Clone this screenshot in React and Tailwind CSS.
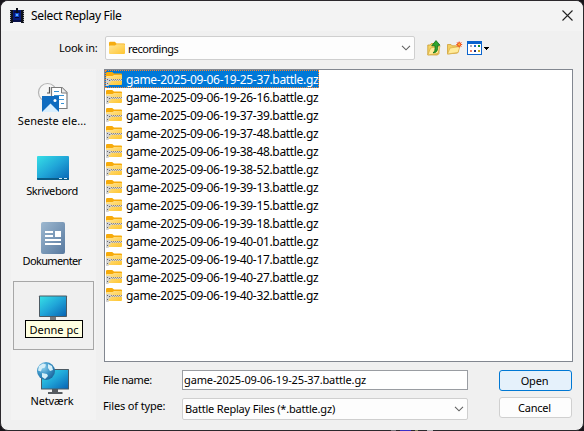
import React from 'react';

const FILES = [
  '19-25-37', '19-26-16', '19-37-39', '19-37-48', '19-38-48', '19-38-52', '19-39-13',
  '19-39-15', '19-39-18', '19-40-01', '19-40-17', '19-40-27', '19-40-32',
].map((t) => `game-2025-09-06-${t}.battle.gz`);

function Defs() {
  return (
    <svg width="0" height="0" className="absolute">
      <defs>
        <linearGradient id="screen" x1="0" y1="0" x2="1" y2="1">
          <stop offset="0" stopColor="#36dfe6" />
          <stop offset="0.5" stopColor="#20a5d8" />
          <stop offset="1" stopColor="#0864b4" />
        </linearGradient>
        <linearGradient id="folder" x1="0" y1="0" x2="1" y2="1">
          <stop offset="0" stopColor="#ffe69a" />
          <stop offset="1" stopColor="#ffc52f" />
        </linearGradient>
        <linearGradient id="doc" x1="0" y1="0" x2="1" y2="1">
          <stop offset="0" stopColor="#9db8d0" />
          <stop offset="1" stopColor="#57799f" />
        </linearGradient>
        <radialGradient id="globe" cx="0.35" cy="0.3" r="0.8">
          <stop offset="0" stopColor="#8fd0ee" />
          <stop offset="0.5" stopColor="#3a93c6" />
          <stop offset="1" stopColor="#185d94" />
        </radialGradient>
      </defs>
    </svg>
  );
}

function AppIcon() {
  return (
    <svg width="16" height="16" viewBox="0 0 16 16" shapeRendering="crispEdges">
      <path d="M1 2h3v13H1zM12 2h3v13h-3z" fill="#10131c" />
      <path d="M1 3h1v1H1zM1 5h1v1H1zM1 7h1v1H1zM1 9h1v1H1zM1 11h1v1H1zM1 13h1v1H1zM14 3h1v1h-1zM14 5h1v1h-1zM14 7h1v1h-1zM14 9h1v1h-1zM14 11h1v1h-1zM14 13h1v1h-1z" fill="#a0a0a0" />
      <path d="M4 2h8v12H4z" fill="#081b78" />
      <path d="M5 3h6v2H5zM4 12h8v2H4z" fill="#07104a" />
      <path d="M6 5h4v5H6z" fill="#1647d0" />
      <path d="M7 0h2v5H7z" fill="#0a0d18" />
      <path d="M7 6h2v2H7z" fill="#58b5ff" />
      <path d="M6 9h4v1H6z" fill="#02082c" />
    </svg>
  );
}

function Folder() {
  return (
    <svg width="16" height="14" viewBox="0 0 16 14" className="shrink-0">
      <path d="M0 2a1.2 1.2 0 0 1 1.2-1.2h4.6L7.5 2.5H15a1 1 0 0 1 1 1V7H0z" fill="#f5ac12" />
      <path d="M0 5.5a1 1 0 0 1 1-1h5L7.600 3.200H15a1 1 0 0 1 1 1V12a1 1 0 0 1-1 1H1a1 1 0 0 1-1-1z" fill="url(#folder)" />
    </svg>
  );
}

function ZipFolder() {
  return (
    <svg width="16" height="16" viewBox="0 1 16 16" className="shrink-0">
      <path d="M0 2.200A1.200 1.200 0 0 1 1.200 1h5L8 2.500h7a1 1 0 0 1 1 1V8H0z" fill="#f7ab0b" />
      <path d="M0 6a1 1 0 0 1 1-1h5.500L8 4h7a1 1 0 0 1 1 1v8a1 1 0 0 1-1 1H1a1 1 0 0 1-1-1z" fill="url(#folder)" />
      <path d="M4 8h12v2H4z" fill="#e3d6b8" />
      <path d="M5 8.500h11" stroke="#85858a" strokeDasharray="1 1" />
      <path d="M4 9.500h12" stroke="#aaa497" strokeDasharray="1 1" />
      <path d="M0 7h4.500v4.500H2.700V15H0z" fill="#d3d3d3" />
      <path d="M1 8h1v1H1zM3 9h1v1H3zM1 12h1v1H1z" fill="#66686c" />
    </svg>
  );
}

function Chevron() {
  return (
    <svg width="10" height="6" viewBox="0 0 10 6" fill="none" stroke="#606060" strokeWidth="1.100">
      <path d="M1 0.800l4 4 4-4" />
    </svg>
  );
}

function UpFolderIcon() {
  return (
    <svg width="16" height="16" viewBox="0 0 16 16">
      <path d="M.8 14.800V5h2.500l1-1.500H9v3h3v7l-1.500 1.500z" fill="#f5d566" stroke="#c99a2c" strokeWidth=".8" />
      <path d="M.8 15L3.500 8l9.500-2-2 7.500z" fill="#ffeb98" stroke="#d4a63a" strokeWidth=".7" />
      <path d="M6 12.800c2-1 2.200-3 2-7H4.700L9 .6l4 4.600-2.300.2c.2 5-1 7.500-4.700 7.400z" fill="#2fa52e" stroke="#126c16" strokeWidth=".8" />
    </svg>
  );
}

function NewFolderIcon() {
  return (
    <svg width="16" height="16" viewBox="0 0 16 16">
      <path d="M.5 14V4.500H4l1 1.300h6.500V11l-1 2z" fill="#f3cf61" stroke="#cfa03a" strokeWidth=".8" />
      <path d="M.5 14l2.500-6 10-1.500-2 6z" fill="#ffeb9b" stroke="#d9ad46" strokeWidth=".7" />
      <path d="M12.200 1.500v6M9.200 4.500h6M10 2.300l4.400 4.400M14.400 2.300L10 6.700" stroke="#f0602c" strokeWidth="1" />
      <circle cx="12.200" cy="4.500" r="1.700" fill="#ffb52b" stroke="#f0451e" />
    </svg>
  );
}

function ViewIcon() {
  return (
    <svg width="23" height="14" viewBox="0 0 23 14" shapeRendering="crispEdges">
      <path d="M0 0h15v14H0z" fill="#0b64cd" />
      <path d="M1 3h13v10H1z" fill="#fff" />
      <path d="M3 4h2v2H3z" fill="#a9a9b5" />
      <path d="M7 4h2v2H7z" fill="#1768d2" />
      <path d="M11 4h2v2h-2z" fill="#189428" />
      <path d="M3 9h2v2H3z" fill="#f18065" />
      <path d="M7 9h2v2H7z" fill="#123087" />
      <path d="M11 9h2v2h-2z" fill="#caa51b" />
      <path d="M17 6h5v1h-1v1h-1v1h-1V8h-1V7h-1z" fill="#000" />
    </svg>
  );
}

function RecentIcon() {
  return (
    <svg width="32" height="32" viewBox="0 0 32 32">
      <circle cx="10.500" cy="10.500" r="9" fill="#f6f6f6" stroke="#b4b4b4" strokeWidth="1.200" />
      <path d="M12.500 5v6H10" fill="none" stroke="#555" strokeWidth="1.200" />
      <path d="M14.500 5.500h10.500l5 5v16H14.500z" fill="#fff" stroke="#7c7c7c" strokeWidth="1.200" />
      <path d="M24.500 5.500V11H30" fill="#e9e9e9" stroke="#7c7c7c" />
      <path d="M17 9.500h5M17 13.500h10M22 17.500h5M24 21.500h3" stroke="#3992d4" strokeWidth="1.200" />
      <path d="M5 14h17v16H5z" fill="#0f6cc0" />
      <path d="M5 30l8.500-8.500L22 30z" fill="#d9efff" />
      <circle cx="18" cy="18.500" r="1.500" fill="#fff" />
    </svg>
  );
}

function DesktopIcon() {
  return (
    <svg width="32" height="32" viewBox="0 0 32 32">
      <rect y="4" width="32" height="24" rx="1" fill="url(#screen)" />
      <path d="M0 26h32v1a1 1 0 0 1-1 1H1a1 1 0 0 1-1-1z" fill="#0b5c86" />
      <path d="M22 26.500h3M27 26.500h3" stroke="#d5efff" strokeWidth="1.200" />
    </svg>
  );
}

function DocumentsIcon() {
  return (
    <svg width="32" height="32" viewBox="0 0 32 32">
      <rect x="4" width="24" height="32" rx="2" fill="url(#doc)" />
      <path d="M8 9h8v2H8zM8 13h8v2H8zM18 9h6v6h-6zM8 17h16v2H8zM8 21h16v2H8z" fill="#fff" />
    </svg>
  );
}

function PcIcon() {
  return (
    <svg width="32" height="32" viewBox="0 0 32 32">
      <path d="M13 24h6v4h4v2H9v-2h4z" fill="#777b80" />
      <rect x="2" y="3.500" width="28" height="21.500" rx=".8" fill="#4c5a63" />
      <path d="M3 4.500h26V24H3z" fill="url(#screen)" />
    </svg>
  );
}

function NetworkIcon() {
  return (
    <svg width="32" height="32" viewBox="0 0 32 32">
      <path d="M15 27h6v3h4.500v2H11v-2h4z" fill="#565b60" />
      <rect x="4" y="7" width="28" height="20.500" rx=".5" fill="#4c5a63" />
      <path d="M5 8h26v18.500H5z" fill="url(#screen)" />
      <circle cx="9" cy="9" r="9" fill="url(#globe)" />
      <path d="M2 4l4-2.500 3 1-1 3-3 1-1 3-3-1zM11 2l4 2 1 4-3 1-2-3zM5 11l5 1 1 2-3 3-3-2z" fill="#d4eef8" />
    </svg>
  );
}

const PLACES = [
  ['Seneste ele...', RecentIcon, 'tracking-[0.05px]'],
  ['Skrivebord', DesktopIcon, 'tracking-[-0.4px]'],
  ['Dokumenter', DocumentsIcon, 'tracking-[-0.65px]'],
  ['Denne pc', PcIcon, 'tracking-[0px]'],
  ['Netværk', NetworkIcon, 'tracking-[-0.15px]'],
];

function Place({ label, Icon, spacing, active }) {
  return (
    <div className={`relative flex h-[69px] w-[81px] flex-col items-center border pr-px pt-[10px] ${active ? 'border-[#a7a7a7] bg-[#f0f0f0]' : 'border-transparent'}`}>
      <Icon />
      {active ? (
        <div className="absolute left-[11px] top-[38px] flex h-[18px] w-[58px] items-center justify-center border border-black bg-[#ffffe1] text-[11px] leading-none">
          {label}
        </div>
      ) : (
        <span className={`h-[14px] pr-[2px] text-[11px] leading-[14px] ${spacing}`}>{label}</span>
      )}
    </div>
  );
}

export default function App() {
  return (
    <div className="relative h-[431px] w-[584px] overflow-hidden whitespace-nowrap bg-[#171419] font-['Noto_Sans',sans-serif] text-black">
      <Defs />
      <div className="flex h-[431px] w-[584px] flex-col overflow-hidden rounded-[8px] border border-[#2b282c] bg-[#f0f0f0]">
        <header className="flex h-[30px] shrink-0 items-center bg-[#f3f3f3] pl-[8px] pr-[10px]">
          <AppIcon />
          <span className="ml-[6px] text-[12px] leading-none tracking-[-0.33px]">Select Replay File</span>
          <svg className="-mt-px ml-auto" width="11" height="11" viewBox="0 0 11 11" stroke="#222" strokeWidth="1.100">
            <path d="M.5.500l10 10M10.500.500l-10 10" />
          </svg>
        </header>

        <div className="flex h-[37px] shrink-0 items-start pt-[5px]">
          <span className="ml-[58px] w-[46px] text-[11px] leading-[24px] tracking-[-0.25px]">Look in:</span>
          <div className="flex h-[24px] w-[310px] items-center rounded-[2px] border border-[#cfcfcf] bg-[#fdfdfd] pl-[3px] pr-[3px]">
            <Folder />
            <span className="ml-[3px] text-[11px] leading-none tracking-[-0.5px]">recordings</span>
            <span className="ml-auto"><Chevron /></span>
          </div>
          <div className="ml-[12px] flex h-[24px] items-center gap-[4px]">
            <UpFolderIcon />
            <NewFolderIcon />
            <ViewIcon />
          </div>
        </div>

        <div className="flex gap-[8px] pl-[10px] pt-px">
          <nav className="flex h-[351px] w-[85px] shrink-0 flex-col gap-px bg-[#f3f3f3] pl-[2px] pt-[2px]">
            {PLACES.map(([label, Icon, spacing]) => (
              <Place key={label} label={label} Icon={Icon} spacing={spacing} active={label === 'Denne pc'} />
            ))}
          </nav>

          <main className="w-[469px]">
            <ul className="h-[293px] border border-[#828790] bg-white">
              {FILES.map((name, i) => (
                <li
                  key={name}
                  className={`flex h-[18px] w-[214px] items-center pl-px pt-[2px] ${i === 0 ? 'bg-[#0078d7] text-white outline-1 -outline-offset-1 outline-dotted outline-[#ff8728]' : ''}`}
                >
                  <ZipFolder />
                  <span className="ml-[4px] text-[12px] leading-[16px] tracking-[-0.33px]">{name}</span>
                </li>
              ))}
            </ul>

            <div className="mt-[8px] flex">
              <div className="-ml-px flex w-[79px] flex-col gap-[6px] text-[11px] leading-[20px]">
                <span className="tracking-[-0.4px]">File name:</span>
                <span className="tracking-[-0.15px]">Files of type:</span>
              </div>
              <div className="flex w-[286px] flex-col gap-[8px] text-[11px] leading-[18px]">
                <div className="h-[20px] border border-[#9a9da2] bg-white pl-px tracking-[-0.13px]">game-2025-09-06-19-25-37.battle.gz</div>
                <div className="flex h-[22px] items-center rounded-[2px] border border-[#cfcfcf] bg-[#fdfdfd] pl-[2px] pr-[3px]">
                  <span className="tracking-[-0.2px]">Battle Replay Files (*.battle.gz)</span>
                  <span className="ml-auto"><Chevron /></span>
                </div>
              </div>
              <div className="ml-[31px] flex flex-col gap-[6px] text-[11px] tracking-[-0.2px]">
                <button className="h-[21px] w-[73px] rounded-[3px] border border-[#0078d4] bg-[#e5f1fb] pr-[2px] leading-[18px]">Open</button>
                <button className="h-[21px] w-[73px] rounded-[3px] border border-[#d0d0d0] bg-[#fdfdfd] pr-[2px] leading-[18px]">Cancel</button>
              </div>
            </div>
          </main>
        </div>
      </div>

      {/* slivers of the desktop showing under the window edge */}
      <div className="absolute bottom-0 left-[391px] flex h-px gap-[4px]">
        <span className="w-[5px] bg-[#77727a]" />
        <span className="w-[11px] bg-[#3a30c8]" />
        <span className="w-[3px] bg-[#8a8660]" />
        <span className="ml-[5px] w-[6px] bg-[#b5b3b8]" />
      </div>
    </div>
  );
}
